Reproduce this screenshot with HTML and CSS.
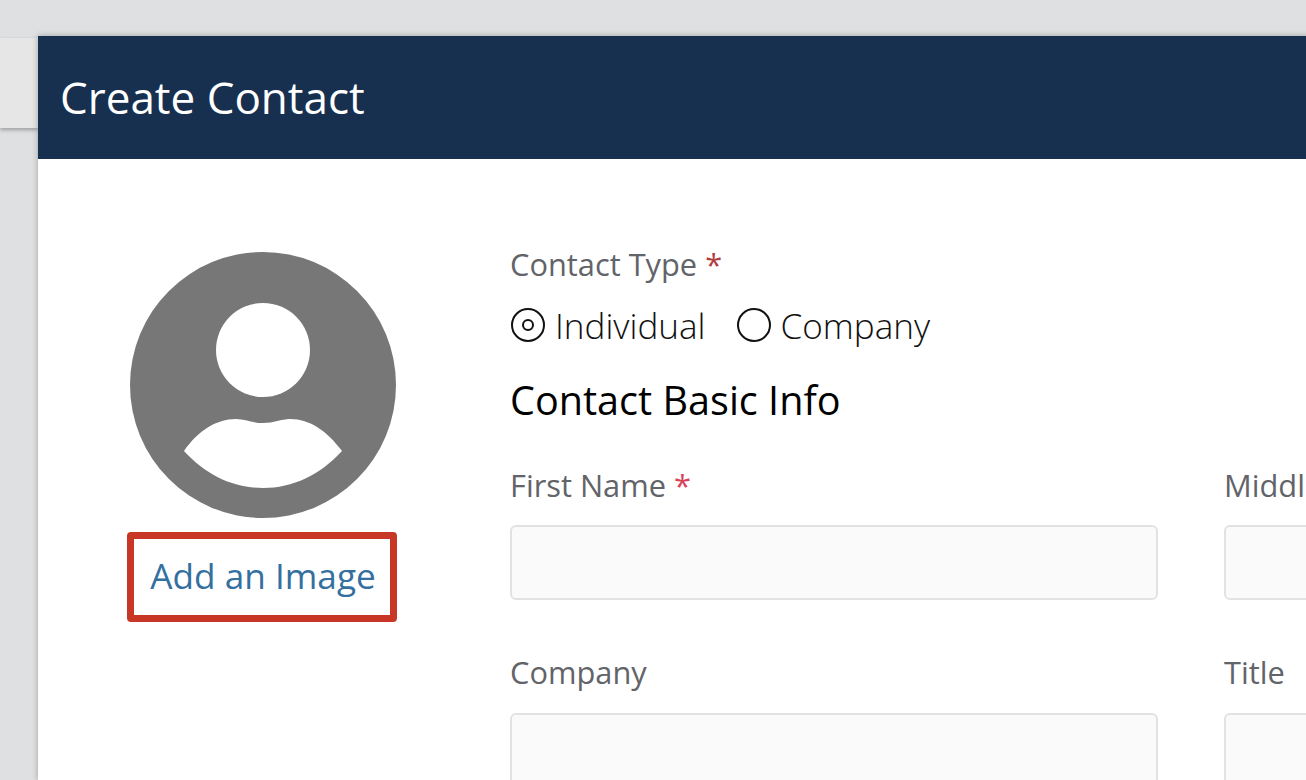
FILE: index.html
```html
<!DOCTYPE html>
<html lang="en">
<head>
<meta charset="utf-8">
<title>Create Contact</title>
<link rel="stylesheet" href="styles.css">
</head>
<body>
<div class="page">
  <div class="strip"></div>
  <main class="modal">
    <header class="modal-head"><h1 class="modal-title">Create Contact</h1></header>
    <div class="modal-body">
      <aside class="photo">
        <svg class="avatar" viewBox="0 0 266 266" aria-hidden="true">
          <circle cx="133" cy="133" r="133" fill="#777777"/>
          <circle cx="133" cy="98" r="47" fill="#ffffff"/>
          <path d="M54 199 C68 179 86 167 106 167 C115 167 122 171 133 171 C144 171 151 167 160 167 C180 167 197 179 212 199 C190 223 163 236 133 236 C103 236 76 223 54 199 Z" fill="#ffffff"/>
        </svg>
        <a class="add-image" href="#">Add an Image</a>
      </aside>
      <form class="form">
        <div class="label">Contact Type <span class="req-dark">*</span></div>
        <div class="radios">
          <label class="radio"><span class="dot dot-on"></span>Individual</label>
          <label class="radio"><span class="dot"></span>Company</label>
        </div>
        <h2 class="section">Contact Basic Info</h2>
        <div class="grid">
          <div class="field">
            <div class="label">First Name <span class="req">*</span></div>
            <div class="input"></div>
          </div>
          <div class="field">
            <div class="label">Middle Name</div>
            <div class="input"></div>
          </div>
          <div class="field field-lower">
            <div class="label">Company</div>
            <div class="input"></div>
          </div>
          <div class="field field-lower">
            <div class="label">Title</div>
            <div class="input"></div>
          </div>
        </div>
      </form>
    </div>
  </main>
</div>
</body>
</html>
```
FILE: styles.css
```css
*, *::after { box-sizing: border-box; }
html, body { margin: 0; height: 100%; overflow: hidden; }
body { background: #dfe0e2; font-family: "Open Sans", sans-serif; }
.page { display: flex; align-items: flex-start; height: 780px; width: 1306px; overflow: hidden; }
.strip {
  flex: 0 0 38px; height: 90px; margin-top: 38px;
  background: #e6e6e6; box-shadow: 0 2px 4px rgba(0,0,0,.3);
}
.modal {
  flex: 1 0 1268px; height: 744px; margin-top: 36px;
  background: #fff; box-shadow: 0 0 6px rgba(0,0,0,.3); position: relative;
}
.modal-head { height: 123px; background: #17304f; display: flex; align-items: center; padding: 0 0 2px 22px; }
.modal-title { margin: 0; color: #fff; font-size: 44px; font-weight: 400; line-height: 1; }
.modal-body { display: flex; }
.photo { flex: 0 0 472px; display: flex; flex-direction: column; align-items: center; padding: 93px 22px 0 0; }
.avatar { width: 266px; height: 266px; display: block; flex: none; }
.add-image {
  margin: 14px 2px 0 0; width: 270px; height: 90px; padding: 0 0 4px 2px;
  border: 7px solid #c83725; border-radius: 4px;
  display: flex; align-items: center; justify-content: center;
  color: #34709f; font-size: 35.2px; text-decoration: none;
}
.form { flex: none; width: 1400px; padding-top: 83px; }
.label { color: #626469; font-size: 30.8px; line-height: 44px; }
.req-dark { color: #b04040; }
.req { color: #d9415a; }
.radios { display: flex; gap: 30px; margin-top: 16px; }
.radio { display: flex; align-items: center; gap: 10px; font-size: 35.1px; font-weight: 300; color: #111; line-height: 46px; }
.dot { width: 34px; height: 34px; border: 2px solid #111; border-radius: 50%; display: block; position: relative; margin-left: 1px; }
.dot-on::after { content: ""; position: absolute; left: 9px; top: 9px; width: 12px; height: 12px; border: 2.5px solid #111; border-radius: 50%; }
.section { margin: 27px 0 0; font-size: 39.6px; font-weight: 400; color: #000; line-height: 50px; }
.grid { display: grid; grid-template-columns: 648px 648px; column-gap: 66px; row-gap: 50px; margin-top: 38px; }
.input { height: 75px; margin-top: 18px; background: #fafafa; border: 2px solid #e2e2e2; border-radius: 6px; }
.field-lower .input { margin-top: 19px; }
```
